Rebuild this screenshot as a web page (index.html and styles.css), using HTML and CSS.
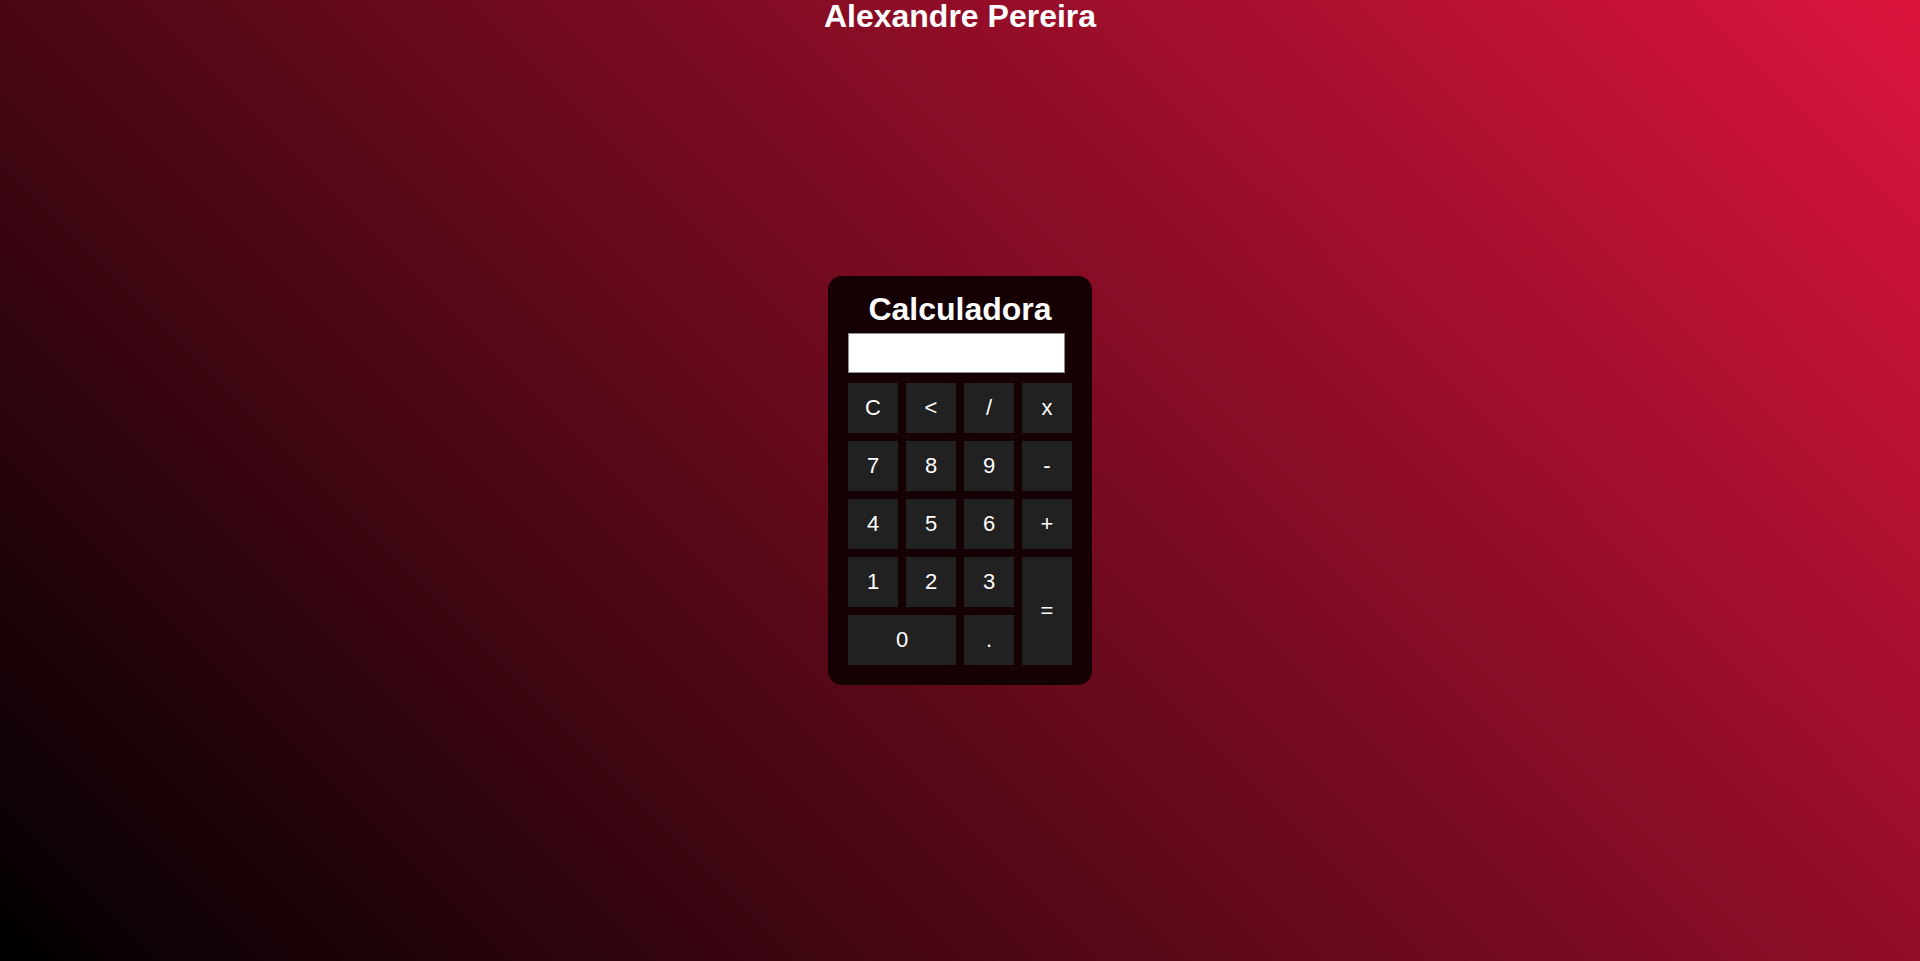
FILE: index.html
```html
<!DOCTYPE html>
<html lang="pt">
<head>
<meta charset="utf-8">
<title>Calculadora</title>
<link rel="stylesheet" href="styles.css">
</head>
<body>
<header class="top">
  <h1 class="author">Alexandre Pereira</h1>
</header>
<main class="stage">
  <div class="calc">
    <h2 class="calc-title">Calculadora</h2>
    <input class="display" type="text" readonly>
    <div class="keys">
      <button class="key">C</button>
      <button class="key">&lt;</button>
      <button class="key">/</button>
      <button class="key">x</button>
      <button class="key">7</button>
      <button class="key">8</button>
      <button class="key">9</button>
      <button class="key">-</button>
      <button class="key">4</button>
      <button class="key">5</button>
      <button class="key">6</button>
      <button class="key">+</button>
      <button class="key">1</button>
      <button class="key">2</button>
      <button class="key">3</button>
      <button class="key key-equals">=</button>
      <button class="key key-zero">0</button>
      <button class="key">.</button>
    </div>
  </div>
</main>
</body>
</html>
```

FILE: styles.css
```css
html, body {
  margin: 0;
  padding: 0;
}

body {
  min-height: 100vh;
  display: grid;
  grid-template-columns: 1fr;
  grid-template-rows: 100vh;
  background: linear-gradient(45deg, #000000, #dc143c);
  font-family: "Liberation Sans", Arial, sans-serif;
  color: #ffffff;
}

.top {
  grid-area: 1 / 1;
  align-self: start;
}

.author {
  margin: 0;
  font-size: 32px;
  line-height: 32px;
  font-weight: bold;
  text-align: center;
  color: #ffffff;
}

.stage {
  grid-area: 1 / 1;
  display: flex;
  align-items: center;
  justify-content: center;
}

.calc {
  width: 224px;
  padding: 15px 20px 20px;
  background: #150004;
  border-radius: 14px;
  display: flex;
  flex-direction: column;
}

.calc-title {
  margin: 0 0 5px;
  font-size: 32px;
  line-height: 37px;
  font-weight: bold;
  text-align: center;
  color: #ffffff;
}

.display {
  box-sizing: border-box;
  width: 217px;
  height: 40px;
  margin: 0 0 10px;
  padding: 0 6px;
  border: 1px solid #8c8c8c;
  background: #ffffff;
  font-family: "Liberation Sans", Arial, sans-serif;
  font-size: 20px;
  outline: none;
}

.keys {
  display: grid;
  grid-template-columns: repeat(4, 50px);
  grid-auto-rows: 50px;
  gap: 8px;
}

.key {
  border: none;
  margin: 0;
  padding: 0;
  background: #212121;
  color: #ffffff;
  font-family: "Liberation Sans", Arial, sans-serif;
  font-size: 22px;
  cursor: pointer;
}

.key-equals {
  grid-column: 4;
  grid-row: 4 / span 2;
}

.key-zero {
  grid-column: 1 / span 2;
}
```
